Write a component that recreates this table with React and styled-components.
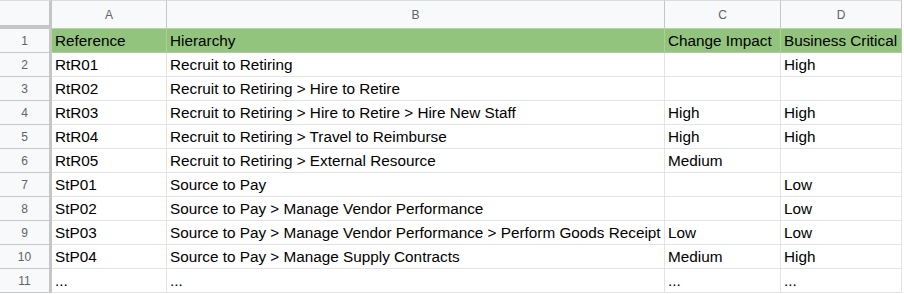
import React from "react";
import styled, { createGlobalStyle } from "styled-components";

const Global = createGlobalStyle`
  html, body { margin: 0; padding: 0; background: #ffffff; }
  body { font-family: "Liberation Sans", Arial, sans-serif; }
`;

const COLS = [
  { key: "A", width: 115 },
  { key: "B", width: 498 },
  { key: "C", width: 116 },
  { key: "D", width: 121 },
];

const Sheet = styled.div`
  display: grid;
  grid-template-columns: 52px ${COLS.map((c) => c.width + "px").join(" ")};
  grid-auto-rows: 24px;
  grid-template-rows: 29px;
  width: max-content;
`;

const Corner = styled.div`
  box-sizing: border-box;
  background: #f8f9fa;
  border-right: 3px solid #c4c7c5;
  border-bottom: 4px solid #c4c7c5;
  border-top: 1px solid #dadcdf;
`;

const ColHead = styled.div`
  box-sizing: border-box;
  background: #f8f9fa;
  border-top: 1px solid #dadcdf;
  border-right: 1px solid #c4c7c5;
  border-bottom: 1px solid #c4c7c5;
  display: flex;
  align-items: center;
  justify-content: center;
  font-size: 12px;
  color: #5f6368;
`;

const RowHead = styled.div`
  box-sizing: border-box;
  background: #f8f9fa;
  border-right: 3px solid #c4c7c5;
  border-bottom: 1px solid #c4c7c5;
  display: flex;
  align-items: center;
  justify-content: center;
  font-size: 12px;
  color: #5f6368;
`;

const Cell = styled.div`
  box-sizing: border-box;
  background: ${(p) => (p.$header ? "#93c47d" : "#ffffff")};
  border-right: 1px solid ${(p) => (p.$header ? "#a9d096" : "#e2e3e3")};
  border-bottom: 1px solid ${(p) => (p.$header ? "#a9d096" : "#e2e3e3")};
  display: flex;
  align-items: center;
  padding: 0 4px 0 3px;
  font-size: 15.3px;
  color: #000000;
  white-space: nowrap;
  overflow: hidden;
`;

const rows = [
  ["Reference", "Hierarchy", "Change Impact", "Business Critical"],
  ["RtR01", "Recruit to Retiring", "", "High"],
  ["RtR02", "Recruit to Retiring > Hire to Retire", "", ""],
  ["RtR03", "Recruit to Retiring > Hire to Retire > Hire New Staff", "High", "High"],
  ["RtR04", "Recruit to Retiring > Travel to Reimburse", "High", "High"],
  ["RtR05", "Recruit to Retiring > External Resource", "Medium", ""],
  ["StP01", "Source to Pay", "", "Low"],
  ["StP02", "Source to Pay > Manage Vendor Performance", "", "Low"],
  ["StP03", "Source to Pay > Manage Vendor Performance > Perform Goods Receipt", "Low", "Low"],
  ["StP04", "Source to Pay > Manage Supply Contracts", "Medium", "High"],
  ["...", "...", "...", "..."],
];

export default function App() {
  return (
    <>
      <Global />
      <Sheet>
        <Corner />
        {COLS.map((c) => (
          <ColHead key={c.key}>{c.key}</ColHead>
        ))}
        {rows.map((r, i) => (
          <React.Fragment key={i}>
            <RowHead>{i + 1}</RowHead>
            {r.map((v, j) => (
              <Cell key={j} $header={i === 0}>
                {v}
              </Cell>
            ))}
          </React.Fragment>
        ))}
      </Sheet>
    </>
  );
}
